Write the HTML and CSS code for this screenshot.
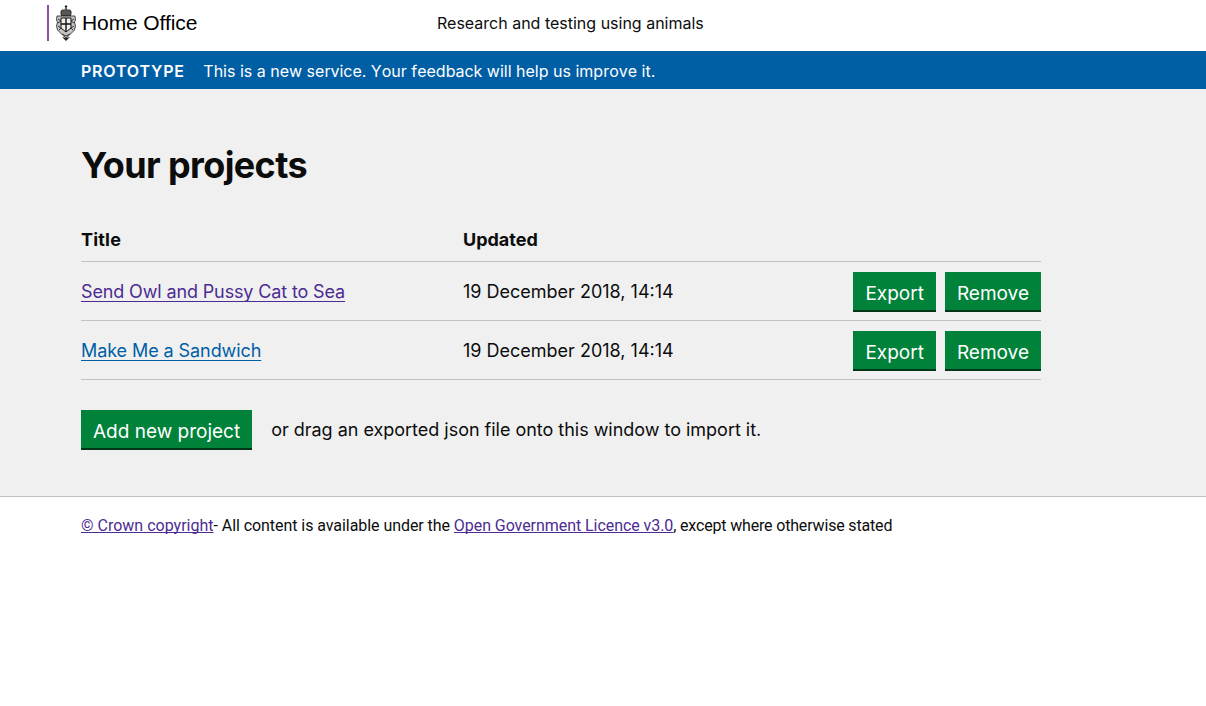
FILE: index.html
```html
<!DOCTYPE html>
<html>
<head>
    <title>Your projects</title>
    <meta name="viewport" content="width=device-width, initial-scale=1.0">
    <link rel="stylesheet" href="styles.css">
</head>
<body>
    <header class="topo">
        <div class="logo">
            <svg class="crest" viewBox="0 0 20 36" width="20" height="36">
                <path d="M10 0l1.500 1.500-1 1 1 1h-3l1-1-1-1z" fill="#222"/>
                <path d="M5 9C4 5 7 4 8 5.500c.5-1 1.500-1.500 2-1.500s1.500.5 2 1.500C13 4 16 5 15 9l-.5 2h-9z" fill="#555" stroke="#111" stroke-width=".7"/>
                <path d="M1 11h18l.5 4-1 2 1 4-1 4-3 3-2 2-3.500 3-3.500-3-2-2-3-3-1-4 1-4-1-2z" fill="#c4c4c4" stroke="#222" stroke-width=".8"/>
                <path d="M5 13h10v10l-5 4-5-4z" fill="#eee" stroke="#111" stroke-width="1"/>
                <path d="M10 13v14M5 19h10" stroke="#111" stroke-width="1.400"/>
                <path d="M2 14l3 2-3 2M18 14l-3 2 3 2M2 21l3 2-2 2M18 21l-3 2 2 2M6 29l4 2 4-2" fill="none" stroke="#333" stroke-width="1"/>
                <path d="M6 32l4 4 4-4-4 1z" fill="#222"/>
            </svg>
            <span class="logo-nome">Home Office</span>
        </div>
        <div class="servico">Research and testing using animals</div>
    </header>

    <div class="faixa">
        <strong class="faixa-tag">PROTOTYPE</strong>
        <span class="faixa-texto">This is a new service. Your feedback will help us improve it.</span>
    </div>

    <main class="conteudo">
        <h1 class="titulo">Your projects</h1>
        <table class="projetos">
            <thead>
                <tr>
                    <th class="col-titulo">Title</th>
                    <th class="col-data">Updated</th>
                    <th></th>
                </tr>
            </thead>
            <tbody>
                <tr>
                    <td><a class="visitado aperta" href="#">Send Owl and Pussy Cat to Sea</a></td>
                    <td>19 December 2018, 14:14</td>
                    <td class="acoes">
                        <button class="botao">Export</button>
                        <button class="botao">Remove</button>
                    </td>
                </tr>
                <tr>
                    <td><a class="link" href="#">Make Me a Sandwich</a></td>
                    <td>19 December 2018, 14:14</td>
                    <td class="acoes">
                        <button class="botao">Export</button>
                        <button class="botao">Remove</button>
                    </td>
                </tr>
            </tbody>
        </table>
        <div class="novo">
            <button class="botao">Add new project</button>
            <span>or drag an exported json file onto this window to import it.</span>
        </div>
    </main>

    <footer class="rodape">
        <a class="visitado coroa" href="#">© Crown copyright</a>- All content is available under the <a class="visitado" href="#">Open Government Licence v3.0</a><span class="rodape-fim">, except where otherwise stated</span>
    </footer>
</body>
</html>
```

FILE: styles.css
```css
body {
    margin: 0;
    background: white;
    color: #0b0c0c;
    font-family: Inter, Arial, sans-serif;
}
a {
    text-decoration-skip-ink: none;
}
.topo {
    height: 51px;
    display: flex;
    align-items: flex-start;
}
.logo {
    margin: 5px 0 0 47px;
    width: 390px;
    height: 36px;
    border-left: 2px solid #8f4fa3;
    box-sizing: border-box;
    display: flex;
    align-items: center;
    gap: 6px;
    padding-left: 7px;
}
.crest {
    flex: none;
}
.logo-nome {
    font-family: "Liberation Sans", Arial, sans-serif;
    font-size: 21px;
    letter-spacing: -0.1px;
    color: black;
}
.servico {
    font-size: 16px;
    line-height: 24px;
    margin-top: 11px;
}
.faixa {
    height: 38px;
    background: #005ea5;
    color: white;
    font-size: 16px;
    line-height: 40px;
    padding-left: 81px;
}
.faixa-tag {
    font-weight: 600;
    letter-spacing: 0.8px;
    margin-right: 14px;
}
.faixa-texto {
    font-kerning: none;
}
.conteudo {
    background: #f0f0f0;
    height: 407px;
    padding-left: 81px;
    overflow: hidden;
    border-bottom: 1px solid #bfc1c3;
}
.titulo {
    font-size: 36px;
    line-height: 44px;
    font-weight: 700;
    letter-spacing: -0.62px;
    margin: 54px 0 30px;
}
.projetos {
    width: 960px;
    border-collapse: collapse;
    font-size: 18px;
}
.projetos a {
    text-underline-offset: 3px;
}
.projetos th {
    text-align: left;
    font-weight: 700;
    height: 44px;
    padding: 0;
    border-bottom: 1px solid #bfc1c3;
}
.projetos td {
    height: 58px;
    padding: 0;
    border-bottom: 1px solid #bfc1c3;
}
.col-titulo {
    width: 382px;
    letter-spacing: 0.18px;
}
.col-data {
    width: 300px;
}
.aperta {
    letter-spacing: -0.134px;
}
.acoes {
    text-align: right;
    white-space: nowrap;
}
.botao {
    background: #00823b;
    color: white;
    border: none;
    border-radius: 0;
    box-shadow: 0 2px 0 #003618;
    font-family: Inter, Arial, sans-serif;
    font-size: 19px;
    line-height: 24px;
    height: 38px;
    padding: 5px 12px 0;
    vertical-align: middle;
    cursor: pointer;
}
.acoes .botao + .botao {
    margin-left: 4px;
}
.link {
    color: #005ea5;
    letter-spacing: -0.08px;
}
.visitado {
    color: #4c2c92;
}
.novo {
    margin-top: 30px;
    font-size: 18px;
    display: flex;
    align-items: flex-start;
    gap: 19px;
}
.novo span {
    line-height: 40px;
    letter-spacing: -0.02px;
}
.rodape {
    font-family: Roboto, Arial, sans-serif;
    font-size: 16px;
    line-height: 24px;
    letter-spacing: -0.06px;
    padding: 17px 0 0 81px;
}
.coroa {
    letter-spacing: 0;
}
.rodape-fim {
    letter-spacing: -0.17px;
}
```
